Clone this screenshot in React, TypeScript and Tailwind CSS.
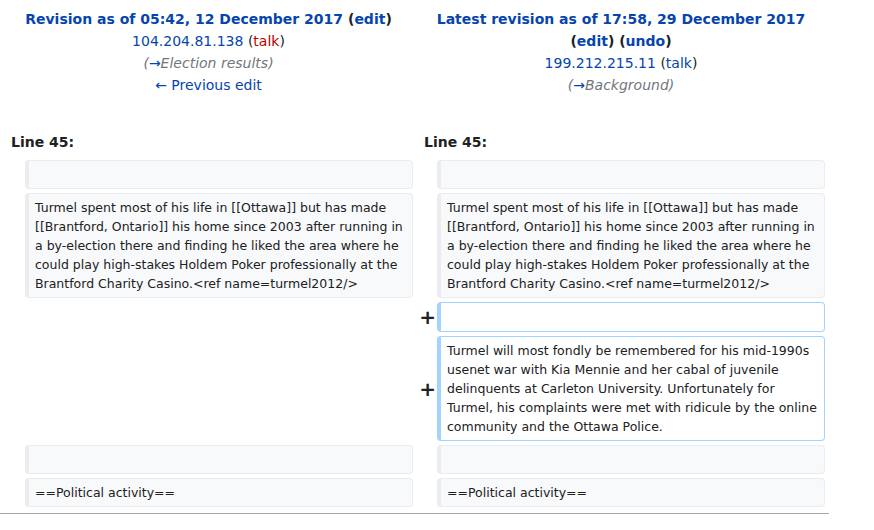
import React from "react";

const link = "text-[#0645ad]";

const Box = ({ added, tall, children }: { added?: boolean; tall?: boolean; children?: React.ReactNode }) => (
  <div
    className={
      "rounded-[4px] border border-l-4 px-[6px] py-[4px] text-[12.5px] leading-[19px] " +
      (added ? "border-[#a3d3ff] bg-white" : "border-[#eaecf0] bg-[#f8f9fa]") +
      (children ? "" : tall ? " h-[30px]" : " h-[29px]")
    }
  >
    {children}
  </div>
);

const Plus = () => (
  <div className="flex items-center justify-end">
    <span className="translate-x-[3px] text-[20px] font-bold leading-none">+</span>
  </div>
);

const para =
  "Turmel spent most of his life in [[Ottawa]] but has made [[Brantford, Ontario]] his home since 2003 after running in a by-election there and finding he liked the area where he could play high-stakes Holdem Poker professionally at the Brantford Charity Casino.<ref name=turmel2012/>";

export default function App() {
  return (
    <div className="min-h-[530px] bg-white pt-[8px] font-['DejaVu_Sans',sans-serif] text-[#202122]">
      <div className="flex text-[14px] leading-[22px]">
        <div className="w-[417px] text-center">
          <div className="font-bold">
            <span className={link}>Revision as of 05:42, 12 December 2017</span> (<span className={link}>edit</span>)
          </div>
          <div>
            <span className={link}>104.204.81.138</span> (<span className="text-[#ba0000]">talk</span>)
          </div>
          <div className="italic text-[#72777d]">
            (<span className={link}>→</span>Election results)
          </div>
          <div className={link}>← Previous edit</div>
        </div>
        <div className="w-[408px] text-center">
          <div className="font-bold">
            <span className={link}>Latest revision as of 17:58, 29 December 2017</span>
            <br />(<span className={link}>edit</span>) (<span className={link}>undo</span>)
          </div>
          <div>
            <span className={link}>199.212.215.11</span> (<span className={link}>talk</span>)
          </div>
          <div className="italic text-[#72777d]">
            (<span className={link}>→</span>Background)
          </div>
        </div>
      </div>

      <div className="mt-[36px] flex text-[14px] font-bold leading-[20px]">
        <div className="w-[417px] pl-[11px]">Line 45:</div>
        <div className="pl-[7px]">Line 45:</div>
      </div>

      <div className="mt-[8px] w-[829px] border-b border-[#a2a9b1] pb-[6px]">
        <div className="grid grid-cols-[17px_388px_16px_388px] gap-[4px] pl-[4px]">
          <div />
          <Box />
          <div />
          <Box />

          <div />
          <Box>{para}</Box>
          <div />
          <Box>{para}</Box>

          <div />
          <div />
          <Plus />
          <Box added tall />

          <div />
          <div />
          <Plus />
          <Box added>
            Turmel will most fondly be remembered for his mid-1990s usenet war with Kia Mennie and her cabal of juvenile
            delinquents at Carleton University. Unfortunately for Turmel, his complaints were met with ridicule by the
            online community and the Ottawa Police.
          </Box>

          <div />
          <Box />
          <div />
          <Box />

          <div />
          <Box>==Political activity==</Box>
          <div />
          <Box>==Political activity==</Box>
        </div>
      </div>
    </div>
  );
}
